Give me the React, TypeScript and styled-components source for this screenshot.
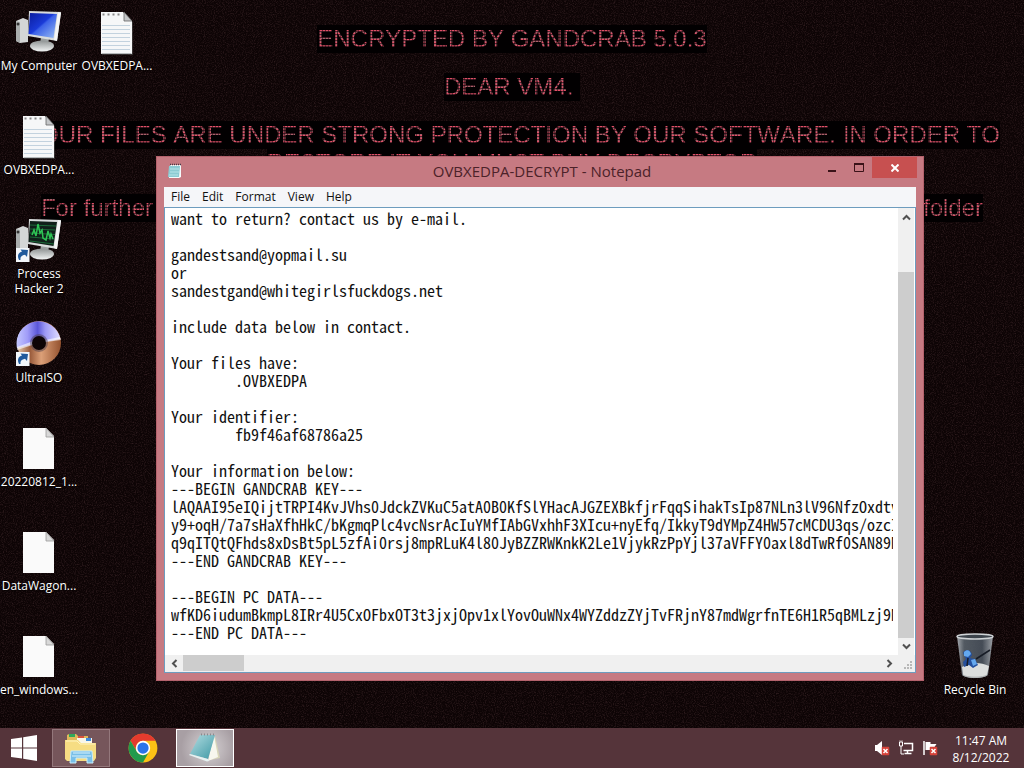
import React from "react";
import styled, { createGlobalStyle } from "styled-components";

const ui = `"Open Sans", "Noto Sans", sans-serif`;

const GlobalStyle = createGlobalStyle`
  *, *::before, *::after { box-sizing: border-box; }
  body { margin: 0; background: #0d0405; font-family: ${ui}; font-size: 12px; }
  button { font: inherit; color: inherit; background: none; border: 0; padding: 0; margin: 0; cursor: default; }
`;

const Screen = styled.div`
  display: flex;
  flex-direction: column;
  min-height: 100vh;
  overflow: hidden;
`;

const Desktop = styled.main`
  position: relative;
  flex: 1;
  display: flex;
  padding-right: 10px;
  background: #0d0405;
`;

const Grain = styled.svg`
  position: absolute;
  inset: 0;
  width: 100%;
  height: 100%;
  pointer-events: none;
`;

const Wallpaper = styled.div`
  position: absolute;
  inset: 5px 0 auto 0;
  display: flex;
  flex-direction: column;
  align-items: center;
  font-family: "Liberation Sans", Arial, sans-serif;
  font-size: 24px;
  line-height: 28px;
  text-align: center;
  font-kerning: none;
  white-space: nowrap;
`;

const WallLine = styled.p<{ $continued?: boolean; $spread?: boolean }>`
  margin: ${(p) => (p.$continued ? "0" : p.$spread ? "17px 0 0" : "20px 0 0")};
  background: #020001;
  ${(p) => p.$spread && "display: flex; justify-content: space-between; width: 92%;"}
`;

const Dither = styled.span`
  color: transparent;
  background:
    repeating-linear-gradient(90deg, transparent 0 2px, rgba(2, 0, 1, 0.5) 2px 3px),
    repeating-linear-gradient(0deg, #e05068 0 1px, #a8606a 1px 2px, #5c2430 2px 3px);
  background-clip: text;
  -webkit-background-clip: text;
`;

const IconGrid = styled.div<{ $end?: boolean }>`
  position: relative;
  display: grid;
  grid-auto-flow: column;
  grid-template-rows: repeat(7, 104px);
  grid-auto-columns: 78px;
  margin-left: ${(p) => (p.$end ? "auto" : "0")};
`;

const Shortcut = styled.button<{ $row?: number; $col?: number }>`
  grid-row: ${(p) => p.$row ?? "auto"};
  grid-column: ${(p) => p.$col ?? "auto"};
  display: flex;
  flex-direction: column;
  align-items: center;
  padding: 8px 0 0;
  gap: 2px;
  color: #fff;
  line-height: 15px;
  text-shadow: 1px 1px 2px #000;
  svg { display: block; flex: none; }
`;

const ShortcutLabel = styled.span<{ $wrap?: boolean }>`
  width: ${(p) => (p.$wrap ? "60px" : "auto")};
  white-space: ${(p) => (p.$wrap ? "normal" : "nowrap")};
`;

const Window = styled.section`
  position: absolute;
  top: 156px;
  left: 156px;
  width: 75%;
  border: 1px solid #b4626c;
  background: #c67a82;
`;

const TitleBar = styled.header`
  display: grid;
  grid-template-columns: 1fr auto 1fr;
  height: 30px;
  padding: 0 6px 0 10px;
`;

const TitleIcon = styled.span`
  padding-top: 6px;
  svg { display: block; }
`;

const Title = styled.h1`
  margin: 0;
  font-size: 15px;
  font-weight: 400;
  line-height: 29px;
  color: #4c2229;
`;

const Controls = styled.div`
  display: flex;
  justify-content: flex-end;
`;

const Control = styled.button<{ $close?: boolean }>`
  display: grid;
  place-items: center;
  width: ${(p) => (p.$close ? "45px" : "27px")};
  height: 21px;
  background: ${(p) => (p.$close ? "#c75050" : "transparent")};
`;

const Client = styled.div`
  margin: 0 7px 7px;
  background: #fff;
`;

const MenuBar = styled.nav`
  display: flex;
  height: 20px;
  padding-left: 1px;
  background: #f5f6f9;
`;

const MenuItem = styled.button`
  padding: 0 6px;
  line-height: 20px;
  color: #111;
`;

const Editor = styled.div`
  display: grid;
  grid-template-columns: minmax(0, 1fr) 17px;
  grid-template-rows: 447px 17px;
  border: 1px solid #6d9cbe;
`;

const TextPane = styled.div`
  padding: 1px 5px 0 6px;
`;

const TextArea = styled.textarea`
  display: block;
  width: 100%;
  height: 442px;
  margin: 0;
  padding: 0;
  border: 0;
  outline: 0;
  resize: none;
  overflow: hidden;
  white-space: pre;
  tab-size: 8;
  color: #111;
  background: transparent;
  font-family: "Noto Sans Mono CJK SC", "Liberation Mono", monospace;
  font-size: 16px;
  line-height: 18px;
`;

const Scroll = styled.div<{ $row?: boolean }>`
  display: flex;
  flex-direction: ${(p) => (p.$row ? "row" : "column")};
  padding: ${(p) => (p.$row ? "0 0 0 1px" : "1px 0 0")};
  background: #f0f0f0;
  ${(p) => (p.$row ? "" : "border-right: 1px solid #fff;")}
`;

const ScrollButton = styled.button`
  display: grid;
  place-items: center;
  flex: none;
  width: 17px;
  height: 17px;
`;

const Thumb = styled.div<{ $row?: boolean }>`
  background: #cdcdcd;
  ${(p) => (p.$row ? "flex: 0 0 61px; margin: 0 auto 1px 0;" : "flex: 1; margin-top: 46px;")}
`;

const Corner = styled.div`
  display: grid;
  place-items: end;
  padding: 0 2px 2px 0;
  background: #f0f0f0;
`;

const Taskbar = styled.footer`
  display: flex;
  align-items: stretch;
  height: 40px;
  color: #fff;
  background: #55343a;
`;

const StartButton = styled.button`
  display: grid;
  place-items: center;
  width: 48px;
`;

const Tasks = styled.div`
  display: flex;
  gap: 4px;
  padding: 1px 0 1px 4px;
`;

const TaskButton = styled.button<{ $state?: "open" | "active" }>`
  display: grid;
  place-items: center;
  width: 58px;
  border: 1px solid transparent;
  ${(p) => p.$state === "open" && "border-color: #94787c; background: #76565b;"}
  ${(p) => p.$state === "active" && "border-color: #fff; background: radial-gradient(circle at 55% 50%, #d8d4d6, #a89fa4 75%);"}
`;

const Tray = styled.div`
  display: flex;
  align-items: center;
  gap: 8px;
  margin-left: auto;
  padding-right: 14px;
`;

const TrayButton = styled.button`
  width: 16px;
  height: 16px;
  svg { display: block; }
`;

const Clock = styled.time`
  width: 58px;
  margin-left: 6px;
  padding-top: 2px;
  line-height: 17px;
  text-align: center;
  white-space: nowrap;
`;

const Monitor = ({ hacker }: { hacker?: boolean }) => (
  <svg width="48" height="48" viewBox="0 0 48 48" aria-hidden="true">
    <defs>
      <linearGradient id="scr" x1="0" y1="0" x2="1" y2="1">
        <stop offset="0" stopColor="#0a1c9c" />
        <stop offset=".45" stopColor="#1a3ad8" />
        <stop offset=".5" stopColor="#3c62e8" />
        <stop offset="1" stopColor="#9cc0f4" />
      </linearGradient>
      <linearGradient id="stand" x1="0" y1="0" x2="0" y2="1">
        <stop offset="0" stopColor="#8e9292" />
        <stop offset="1" stopColor="#f2f4f4" />
      </linearGradient>
    </defs>
    <path d="M1 13l7-3 5 2v22l-8 1-4-2z" fill="#d4d6d6" />
    <path d="M1 13l4 1v21l-4-2z" fill="#a9adad" />
    <circle cx="3" cy="16" r="1.5" fill="#333" />
    <path d="M26 29l8 1-1 7h-8z" fill="#9da1a1" />
    <ellipse cx="27" cy="38" rx="12" ry="5.5" fill="url(#stand)" />
    <path d="M14 3l32 1-4 29-29-5z" fill="#d9dcdc" />
    <path d="M43 4l3 1-4 28-3-1z" fill="#f4f5f5" />
    <path d="M15 5l27 1-3.500 24-25-4z" fill={hacker ? "#10201a" : "url(#scr)"} />
    {hacker && (
      <g fill="none">
        <path d="M15 9l26 1M15 13l25 1M15 17l25 1.500M15 21l24 2M15 25l24 3" stroke="#1c6a38" />
        <path d="M17 19l2-5 2 6 2-12 2 9 2-3 1 8 3 2 2-9 2 7 1-4 2 5" stroke="#2fc455" strokeWidth="1.500" />
      </g>
    )}
    {hacker && <ShortcutArrow />}
  </svg>
);

const ShortcutArrow = () => (
  <g>
    <path d="M1 32h13.500v14H1z" fill="#f2f6fa" />
    <path d="M4 44c-2-4-1-7.500 3-8.500L5.500 33.500 13 34l-1 7-2-2.200C6.500 39.500 5 41 5.500 44z" fill="#1f5a9c" />
  </g>
);

const TextFile = () => (
  <svg width="48" height="48" viewBox="0 0 48 48" aria-hidden="true">
    <path d="M9 47V5h21l10 9v33z" fill="#555" opacity=".5" />
    <path d="M8 46V4h22l9 9v33z" fill="#f6f7f8" />
    <path d="M31 4v9h8z" fill="#c4c6c8" stroke="#666" strokeWidth=".8" />
    <path d="M8.500 45.500h30" stroke="#b5b9bb" />
    <path d="M9.500 6.500h20" stroke="#888" strokeWidth="2" strokeDasharray="2 3" />
    <path d="M9 17.500h28M9 21.500h28M9 25.500h28M9 29.500h28M9 33.500h28M9 37.500h28M9 41.500h28" stroke="#c3d2de" />
  </svg>
);

const BlankFile = () => (
  <svg width="48" height="48" viewBox="0 0 48 48" aria-hidden="true">
    <path d="M8 45V4h23l8 8v33z" fill="#fafafa" />
    <path d="M31 4v9h8z" fill="#d8d8d8" stroke="#999" strokeWidth=".8" />
  </svg>
);

const Disc = () => (
  <svg width="48" height="48" viewBox="0 0 48 48" aria-hidden="true">
    <defs>
      <linearGradient id="discTop" x1="0" y1="0" x2="1" y2="0">
        <stop offset="0" stopColor="#c4c8ff" />
        <stop offset=".25" stopColor="#a09cf8" />
        <stop offset=".48" stopColor="#5a56d8" />
        <stop offset=".65" stopColor="#9c98f4" />
        <stop offset="1" stopColor="#e2deff" />
      </linearGradient>
      <linearGradient id="discLow" x1="0" y1="0" x2="1" y2="0">
        <stop offset="0" stopColor="#e8cdb0" />
        <stop offset=".3" stopColor="#9a5c3c" />
        <stop offset=".55" stopColor="#dca078" />
        <stop offset="1" stopColor="#94522f" />
      </linearGradient>
    </defs>
    <circle cx="24" cy="23" r="22" fill="url(#discLow)" />
    <path d="M2 28A22 22 0 0 1 45.500 19L24 23z" fill="url(#discTop)" />
    <path d="M2 27l19-7 3 3-22 7zM45 17l-20 4-1 2 22-3z" fill="#fff" opacity=".6" />
    <circle cx="24" cy="23" r="9" fill="#4b3d48" opacity=".5" />
    <circle cx="24" cy="23" r="7" fill="#0d0405" />
    <ShortcutArrow />
  </svg>
);

const Bin = () => (
  <svg width="48" height="48" viewBox="0 0 48 48" aria-hidden="true">
    <defs>
      <linearGradient id="glass" x1="0" y1="0" x2="1" y2="0">
        <stop offset="0" stopColor="#b4bac0" />
        <stop offset=".2" stopColor="#59626b" />
        <stop offset=".7" stopColor="#4a535e" />
        <stop offset="1" stopColor="#aab0b6" />
      </linearGradient>
    </defs>
    <path d="M6 4h36l-5 39c-3 4-23 4-26 0z" fill="url(#glass)" opacity=".9" />
    <path d="M11 35c8-5 18-5 27-1l-2 9c-4 4-20 4-24 0z" fill="#dcdedd" />
    <path d="M12 21c3-5 8-3 9 2l-2 3 5 1 3 6-5 3-4-3-5 2-1-5 3-3z" fill="#244f9c" />
    <path d="M13 20c3-3 6-2 7 2l-3 3-4-1zM20 28l4-1 2 5-4 2z" fill="#64a8ee" />
    <path d="M25 27l14-9M17 26l-1 8" stroke="#171c26" strokeWidth="1.500" />
    <ellipse cx="24" cy="4.500" rx="18" ry="2.500" fill="#3d444c" stroke="#cfd3d6" strokeWidth="1.500" />
    <path d="M12 43c3 3 21 3 24 0" stroke="#a5a9aa" fill="none" />
  </svg>
);

const NotepadSmall = () => (
  <svg width="16" height="17" viewBox="0 0 16 17" aria-hidden="true">
    <path d="M3 2h11v12l-2 1H2z" fill="#f5fbfc" />
    <path d="M2 3h11l-1 11H1z" fill="#8ccbd3" />
    <path d="M3 6h9M3 9h9M2 12h9" stroke="#b8e4e8" />
    <path d="M3 1.500h11" stroke="#4a3a44" strokeWidth="1.500" strokeDasharray="1 1" />
  </svg>
);

const NotepadLarge = () => (
  <svg width="34" height="34" viewBox="0 0 34 34" aria-hidden="true">
    <defs>
      <linearGradient id="pad" x1="0" y1="0" x2="1" y2="1">
        <stop offset="0" stopColor="#b4dde2" />
        <stop offset="1" stopColor="#3d98a4" />
      </linearGradient>
    </defs>
    <path d="M27 5l5 22-10 2z" fill="#d8d6b8" />
    <path d="M26 4l4 22-10 4z" fill="#f7f7ee" />
    <path d="M12 4h15l-7 24-18-5z" fill="url(#pad)" />
    <path d="M2 23l18 5 1 2-2 .5L1 24z" fill="#e6f2f2" />
    <path d="M13 3.500h13" stroke="#8a8a8e" strokeWidth="2" strokeDasharray="1 2" />
  </svg>
);

const Explorer = () => (
  <svg width="34" height="34" viewBox="0 0 34 34" aria-hidden="true">
    <path d="M3 4l2-1h7l2 2h10v5H3z" fill="#dfb95a" />
    <path d="M5 3h6v3H5z" fill="#31a85a" />
    <path d="M14 5h6v3h-6z" fill="#d9513c" />
    <path d="M13 7h15v5H13z" fill="#f8f6ea" />
    <path d="M22 7h5v3h-5z" fill="#3f8bdc" />
    <path d="M1 9h13l3 3h15v15l-2 3H3l-2-2z" fill="#f6dd83" />
    <path d="M2 10h11l3 3h15" stroke="#fff4bf" fill="none" />
    <path d="M6 32l1-12h21l1 12h-6v-5H12v5z" fill="#78bfe8" stroke="#c9ecfb" />
    <path d="M9 22h17M8 25h19" stroke="#d8f2fc" />
  </svg>
);

const Chrome = () => (
  <svg width="30" height="30" viewBox="0 0 48 48" aria-hidden="true">
    <circle cx="24" cy="24" r="23" fill="#fbc116" />
    <path d="M4.080 12.500A23 23 0 0 1 43.920 12.500H24a11.500 11.500 0 0 0-9.960 17.250z" fill="#e33b2e" />
    <path d="M4.080 12.500A23 23 0 0 0 24 47l9.960-17.250A11.500 11.500 0 0 1 14.040 29.750z" fill="#229a4c" />
    <circle cx="24" cy="24" r="11.500" fill="#fff" />
    <circle cx="24" cy="24" r="9" fill="#2a74e8" />
  </svg>
);

const ErrorBadge = () => (
  <g>
    <path d="M8.500 7.500h6v7h-6z" fill="#d5423a" stroke="#d5423a" strokeWidth="1.500" strokeLinejoin="round" />
    <path d="M9.500 9l4 4M13.500 9l-4 4" stroke="#fff" strokeWidth="1.500" />
  </g>
);

const note = `want to return? contact us by e-mail.

gandestsand@yopmail.su
or
sandestgand@whitegirlsfuckdogs.net

include data below in contact.

Your files have:
\t.OVBXEDPA

Your identifier:
\tfb9f46af68786a25

Your information below:
---BEGIN GANDCRAB KEY---
lAQAAI95eIQijtTRPI4KvJVhs0JdckZVKuC5atA0B0KfSlYHacAJGZEXBkfjrFqqSihakTsIp87NLn3lV96NfzOxdtv
y9+oqH/7a7sHaXfhHkC/bKgmqPlc4vcNsrAcIuYMfIAbGVxhhF3XIcu+nyEfq/IkkyT9dYMpZ4HW57cMCDU3qs/ozcI
q9qITQtQFhds8xDsBt5pL5zfAi0rsj8mpRLuK4l80JyBZZRWKnkK2Le1VjykRzPpYjl37aVFFY0axl8dTwRf0SAN89N
---END GANDCRAB KEY---

---BEGIN PC DATA---
wfKD6iudumBkmpL8IRr4U5CxOFbxOT3t3jxjOpv1xlYovOuWNx4WYZddzZYjTvFRjnY87mdWgrfnTE6H1R5qBMLzj9N
---END PC DATA---`;

const files = [
  { label: "My Computer", icon: <Monitor />, row: 1, col: 1 },
  { label: "OVBXEDPA...", icon: <TextFile />, row: 1, col: 2 },
  { label: "OVBXEDPA...", icon: <TextFile />, row: 2, col: 1 },
  { label: "Process Hacker 2", icon: <Monitor hacker />, row: 3, col: 1, wrap: true },
  { label: "UltraISO", icon: <Disc />, row: 4, col: 1 },
  { label: "20220812_1...", icon: <BlankFile />, row: 5, col: 1 },
  { label: "DataWagon...", icon: <BlankFile />, row: 6, col: 1 },
  { label: "en_windows...", icon: <BlankFile />, row: 7, col: 1 },
];

const Chevron = ({ d }: { d: string }) => (
  <svg width="9" height="9" viewBox="0 0 9 9" aria-hidden="true">
    <path d={d} fill="none" stroke="#505050" strokeWidth="2" />
  </svg>
);

export default function App() {
  return (
    <Screen>
      <GlobalStyle />
      <Desktop>
        <Grain aria-hidden="true">
          <filter id="grain" x="0" y="0" width="100%" height="100%">
            <feTurbulence type="fractalNoise" baseFrequency=".9" numOctaves="2" seed="4" />
            <feColorMatrix values="0 0 0 0 .45  0 0 0 0 .2  0 0 0 0 .22  1.8 0 0 0 -.8" />
          </filter>
          <rect width="100%" height="100%" filter="url(#grain)" opacity=".26" />
        </Grain>
        <Wallpaper>
          <WallLine><Dither>ENCRYPTED BY GANDCRAB 5.0.3</Dither></WallLine>
          <WallLine><Dither>DEAR VM4.&nbsp;</Dither></WallLine>
          <WallLine>
            <Dither>YOUR FILES ARE UNDER STRONG PROTECTION BY OUR SOFTWARE. IN ORDER TO</Dither>
          </WallLine>
          <WallLine $continued>
            <Dither>RESTORE IT YOU MUST BUY DECRYPTOR</Dither>
          </WallLine>
          <WallLine $spread>
            <Dither>For further</Dither>
            <Dither>folder</Dither>
          </WallLine>
        </Wallpaper>

        <IconGrid>
          {files.map((f) => (
            <Shortcut key={`${f.col}-${f.row}`} $row={f.row} $col={f.col}>
              {f.icon}
              <ShortcutLabel $wrap={f.wrap}>{f.label}</ShortcutLabel>
            </Shortcut>
          ))}
        </IconGrid>
        <IconGrid $end>
          <Shortcut $row={7}>
            <Bin />
            <ShortcutLabel>Recycle Bin</ShortcutLabel>
          </Shortcut>
        </IconGrid>

        <Window aria-label="OVBXEDPA-DECRYPT - Notepad">
          <TitleBar>
            <TitleIcon><NotepadSmall /></TitleIcon>
            <Title>OVBXEDPA-DECRYPT - Notepad</Title>
            <Controls>
              <Control aria-label="Minimize">
                <svg width="10" height="10" viewBox="0 0 10 10"><path d="M1 8h8" stroke="#3a1218" strokeWidth="2" /></svg>
              </Control>
              <Control aria-label="Maximize">
                <svg width="10" height="9" viewBox="0 0 10 9"><path d="M.5 1v7.500h9V1" fill="none" stroke="#3a1218" /><path d="M0 1h10" stroke="#3a1218" strokeWidth="2" /></svg>
              </Control>
              <Control $close aria-label="Close">
                <svg width="8" height="8" viewBox="0 0 8 8"><path d="M.5.5l7 7M7.500.5l-7 7" stroke="#fff" strokeWidth="2" /></svg>
              </Control>
            </Controls>
          </TitleBar>
          <Client>
            <MenuBar>
              {["File", "Edit", "Format", "View", "Help"].map((m) => <MenuItem key={m}>{m}</MenuItem>)}
            </MenuBar>
            <Editor>
              <TextPane>
                <TextArea aria-label="Document text" wrap="off" spellCheck={false} readOnly value={note} />
              </TextPane>
              <Scroll>
                <ScrollButton aria-label="Scroll up"><Chevron d="M1 6.500L4.500 3 8 6.500" /></ScrollButton>
                <Thumb />
                <ScrollButton aria-label="Scroll down"><Chevron d="M1 2.500L4.500 6 8 2.500" /></ScrollButton>
              </Scroll>
              <Scroll $row>
                <ScrollButton aria-label="Scroll left"><Chevron d="M6.500 1L3 4.500 6.500 8" /></ScrollButton>
                <Thumb $row />
                <ScrollButton aria-label="Scroll right"><Chevron d="M2.500 1L6 4.500 2.500 8" /></ScrollButton>
              </Scroll>
              <Corner>
                <svg width="9" height="9" viewBox="0 0 9 9" aria-hidden="true">
                  <path d="M6 0h2v2H6zM3 3h2v2H3zM6 3h2v2H6zM0 6h2v2H0zM3 6h2v2H3zM6 6h2v2H6z" fill="#b8b8b8" />
                </svg>
              </Corner>
            </Editor>
          </Client>
        </Window>
      </Desktop>

      <Taskbar>
        <StartButton aria-label="Start">
          <svg width="26" height="26" viewBox="0 0 26 26">
            <path d="M0 4l11-1.600V12.400H0zM12.200 2.200L26 0v12.400H12.200zM0 13.600h11v10L0 22zM12.200 13.600H26V26l-13.800-2.200z" fill="#fff" />
          </svg>
        </StartButton>
        <Tasks>
          <TaskButton $state="open" aria-label="File Explorer"><Explorer /></TaskButton>
          <TaskButton aria-label="Google Chrome"><Chrome /></TaskButton>
          <TaskButton $state="active" aria-label="Notepad"><NotepadLarge /></TaskButton>
        </Tasks>
        <Tray>
          <TrayButton aria-label="Volume muted">
            <svg width="16" height="16" viewBox="0 0 16 16"><path d="M1 5h2l5-4v14L3 11H1z" fill="#fff" /><ErrorBadge /></svg>
          </TrayButton>
          <TrayButton aria-label="Network">
            <svg width="16" height="16" viewBox="0 0 16 16" fill="none" stroke="#fff">
              <path d="M6 3.500h8.500v7H5.500M9.500 10.500v3M6.500 13.500h7" strokeWidth="1.500" />
              <path d="M1.500 2v4h3V2zM3 6v8h3M2 .5v1M4 .5v1" />
            </svg>
          </TrayButton>
          <TrayButton aria-label="Action Center">
            <svg width="16" height="16" viewBox="0 0 16 16"><path d="M2 1v14" stroke="#fff" strokeWidth="1.500" /><path d="M3.500 2h5v2h6l-2 3 2 3H3.500z" fill="#fff" /><ErrorBadge /></svg>
          </TrayButton>
          <Clock dateTime="2022-08-12T11:47">11:47 AM<br />8/12/2022</Clock>
        </Tray>
      </Taskbar>
    </Screen>
  );
}
